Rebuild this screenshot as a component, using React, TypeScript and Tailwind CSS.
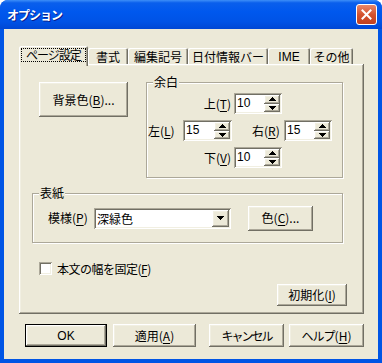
import React from "react";

const raised =
  "shadow-[inset_-1px_-1px_#716f64,inset_1px_1px_#ffffff,inset_-2px_-2px_#aca899,inset_2px_2px_#f1efe2]";
const sunken =
  "shadow-[inset_1px_1px_#aca899,inset_-1px_-1px_#ffffff,inset_2px_2px_#716f64,inset_-2px_-2px_#f1efe2]";
const etched = "border border-[#aca899] shadow-[1px_1px_#ffffff,inset_1px_1px_#ffffff]";

function Arrow({ up }: { up?: boolean }) {
  return (
    <svg width="7" height="4" viewBox="0 0 7 4" shapeRendering="crispEdges">
      <path d={up ? "M3.5 0 L7 4 L0 4 Z" : "M0 0 L7 0 L3.5 4 Z"} fill="#000" />
    </svg>
  );
}

function Key({ k }: { k: string }) {
  return <span className="underline underline-offset-2">{k}</span>;
}

function Btn({ w, h = 23, children, def }: { w: number; h?: number; children: React.ReactNode; def?: boolean }) {
  if (def) {
    return (
      <div className="border border-black" style={{ width: w, height: h }}>
        <div className={`w-full h-full ${raised} flex items-center justify-center leading-none`}>{children}</div>
      </div>
    );
  }
  return (
    <div className={`${raised} flex items-center justify-center leading-none shrink-0`} style={{ width: w, height: h }}>
      {children}
    </div>
  );
}

function Spin({ w, value }: { w: number; value: string }) {
  return (
    <div className={`bg-white ${sunken} flex p-[2px] h-[21px] shrink-0`} style={{ width: w }}>
      <span className="flex-1 pl-[1px] leading-[17px] font-['Liberation_Sans',sans-serif] text-[12px]">{value}</span>
      <div className="flex flex-col w-[16px]">
        <div className={`flex-1 bg-[#ece9d8] ${raised} flex items-center justify-center`}>
          <Arrow up />
        </div>
        <div className={`flex-1 bg-[#ece9d8] ${raised} flex items-center justify-center`}>
          <Arrow />
        </div>
      </div>
    </div>
  );
}

function Tab({ w, label, active }: { w: number; label: React.ReactNode; active?: boolean }) {
  if (active) {
    return (
      <div
        className="relative z-10 -mb-[2px] h-[20px] bg-[#ece9d8] rounded-t-[2px] shadow-[inset_1px_1px_#ffffff,inset_-1px_0_#716f64,inset_-2px_0_#aca899] pt-[2px] px-[2px] shrink-0"
        style={{ width: w }}
      >
        <div className="border border-dotted border-black h-[14px] flex items-center justify-center leading-none">{label}</div>
      </div>
    );
  }
  return (
    <div
      className="h-[16px] bg-[#ece9d8] rounded-t-[2px] shadow-[inset_1px_1px_#ffffff,inset_-1px_0_#716f64,inset_-2px_0_#aca899] flex items-center justify-center leading-none pt-[2px] shrink-0"
      style={{ width: w }}
    >
      {label}
    </div>
  );
}

export default function App() {
  return (
    <div className="w-[382px] h-[363px] flex flex-col rounded-t-[8px] bg-[#0055e5] overflow-hidden font-['Noto_Sans_CJK_JP','Noto_Sans_CJK_SC',sans-serif] text-[12px] text-black">
      {/* title bar */}
      <div className="h-[29px] shrink-0 flex items-center pl-[7px] pr-[5px] bg-[linear-gradient(to_bottom,#3d8ff8_0%,#0a5fec_10%,#0058ee_40%,#0053e6_75%,#0047d4_100%)]">
        <span className="flex-1 text-white font-bold text-[12px] tracking-[-1px] leading-none [text-shadow:1px_1px_0_#0a1e8c]">
          オプション
        </span>
        <div className="w-[21px] h-[21px] rounded-[3px] border border-white bg-[linear-gradient(to_bottom,#e8886a,#d4532f_50%,#c2401e)] flex items-center justify-center">
          <svg width="11" height="11" viewBox="0 0 11 11">
            <path d="M1.5 1.5 L9.5 9.5 M9.5 1.5 L1.5 9.5" stroke="#fff" strokeWidth="2" strokeLinecap="square" />
          </svg>
        </div>
      </div>

      {/* client */}
      <div className="flex-1 mx-[4px] mb-[4px] bg-[#ece9d8] pl-[15px] pt-[17px] flex flex-col">
        <div className="flex items-end h-[18px]">
          <Tab w={69} label={<span className="tracking-[-1px]">ページ設定</span>} active />
          <Tab w={40} label="書式" />
          <Tab w={60} label="編集記号" />
          <Tab w={80} label="日付情報バー" />
          <Tab w={42} label={<span className="font-['Liberation_Sans',sans-serif]">IME</span>} />
          <Tab w={43} label="その他" />
        </div>

        <div className={`w-[345px] h-[250px] ${raised} flex flex-col pt-[18px]`}>
          <div className="flex items-start">
            <div className="ml-[20px]">
              <Btn w={89} h={35}>
                背景色(<Key k="B" />)...
              </Btn>
            </div>
            <div className={`relative ml-[18px] w-[197px] h-[96px] ${etched} pt-[10px]`}>
              <span className="absolute left-[6px] -top-[7px] bg-[#ece9d8] px-[1px] leading-none">余白</span>
              <div className="flex items-center">
                <span className="w-[87px] text-right pr-[3px] leading-none">
                  上(<Key k="T" />)
                </span>
                <Spin w={48} value="10" />
              </div>
              <div className="flex items-center mt-[6px]">
                <span className="ml-[1px] w-[35px] leading-none">
                  左(<Key k="L" />)
                </span>
                <Spin w={49} value="15" />
                <span className="ml-[20px] w-[32px] leading-none">
                  右(<Key k="R" />)
                </span>
                <Spin w={48} value="15" />
              </div>
              <div className="flex items-center mt-[6px]">
                <span className="w-[87px] text-right pr-[3px] leading-none">
                  下(<Key k="V" />)
                </span>
                <Spin w={48} value="10" />
              </div>
            </div>
          </div>

          <div className={`relative ml-[13px] mt-[15px] w-[311px] h-[50px] ${etched} flex items-center`}>
            <span className="absolute left-[6px] -top-[7px] bg-[#ece9d8] px-[1px] leading-none">表紙</span>
            <span className="ml-[15px] w-[46px] leading-none">
              模様(<Key k="P" />)
            </span>
            <div className={`w-[137px] h-[21px] bg-white ${sunken} flex p-[2px]`}>
              <span className="flex-1 pl-[1px] leading-[17px]">深緑色</span>
              <div className={`w-[17px] bg-[#ece9d8] ${raised} flex items-center justify-center`}>
                <Arrow />
              </div>
            </div>
            <div className="ml-[17px]">
              <Btn w={65} h={25}>
                色(<Key k="C" />)...
              </Btn>
            </div>
          </div>

          <div className="flex items-center ml-[20px] mt-[19px]">
            <div className={`w-[13px] h-[13px] bg-white ${sunken}`} />
            <span className="ml-[5px] leading-none tracking-[-0.5px]">
              本文の幅を固定(<Key k="F" />)
            </span>
          </div>

          <div className="ml-[258px] mt-[9px]">
            <Btn w={70} h={22}>
              初期化(<Key k="I" />)
            </Btn>
          </div>
        </div>

        <div className="flex mt-[10px]">
          <div className="ml-[6px]">
            <Btn w={82} def>
              <span className="font-['Liberation_Sans',sans-serif]">OK</span>
            </Btn>
          </div>
          <div className="ml-[6px]">
            <Btn w={83}>
              適用(<Key k="A" />)
            </Btn>
          </div>
          <div className="ml-[13px]">
            <Btn w={75}>
              <span className="tracking-[-2px]">キャンセル</span>
            </Btn>
          </div>
          <div className="ml-[5px]">
            <Btn w={75}>
              <span className="tracking-[-1px]">ヘルプ</span>(<Key k="H" />)
            </Btn>
          </div>
        </div>
      </div>
    </div>
  );
}
